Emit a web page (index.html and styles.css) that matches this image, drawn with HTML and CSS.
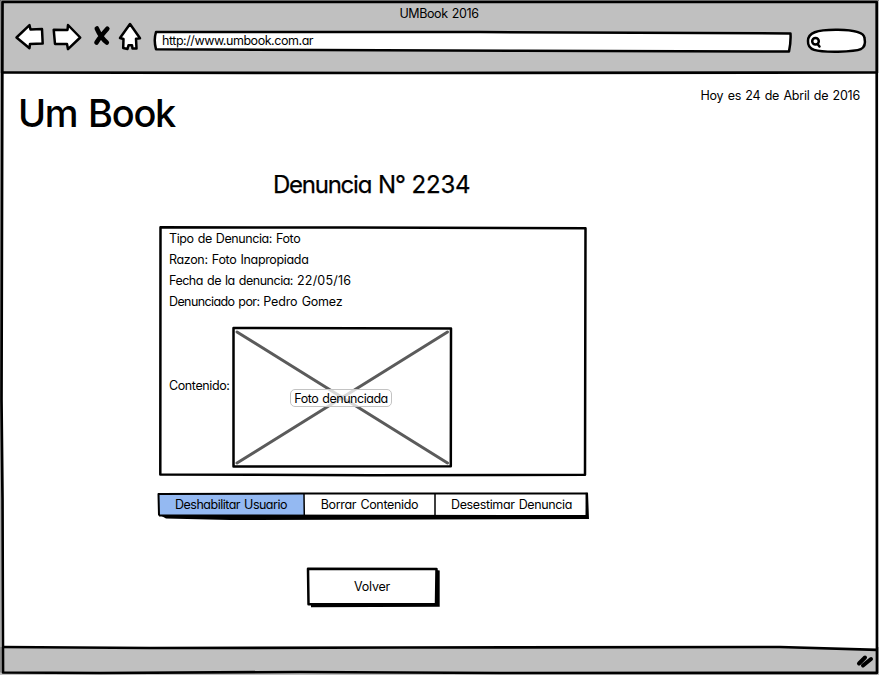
FILE: index.html
```html
<!DOCTYPE html>
<html lang="es">
<head>
<meta charset="utf-8">
<title>UMBook 2016</title>
<link rel="stylesheet" href="styles.css">
</head>
<body>
<div class="window">
  <header class="chrome">
    <div class="window-title"><span class="t-title">UMBook 2016</span></div>
    <div class="toolbar">
      <svg class="nav-icons" width="130" height="32" viewBox="14 22 130 32">
        <g class="ink">
          <path d="M16.5 37.500 L29.500 25.200 L30.500 29.500 L42 29 L42.700 43.500 L30 44 L29.500 48.200Z"/>
          <path d="M53.700 29.700 L67.500 30 L68 25 L80.200 37.500 L68 49.200 L67 44 L55 44 Z"/>
          <path d="M130 24 L140 38.300 L136 38.800 L136.500 48.500 L132.500 48.500 L132 45.200 L128.500 45.200 L127.500 49 L123.200 48 L123.500 39 L120 38 Z"/>
        </g>
        <path class="cross" d="M96.800 28.500 Q101 38 106.800 42.500 M107.300 28.800 Q100 37 96.500 42.500"/>
      </svg>
      <div class="address">
        <svg class="outline" width="640" height="24" viewBox="153 29 640 24"><path class="ink" d="M156 32 L480 32 L790.500 33.500 Q791 42 789 51.500 L520 50.800 L156 49.300 Q153.500 40 156 32Z"/></svg>
        <span class="t-url">http://www.umbook.com.ar</span>
      </div>
      <svg class="search" width="62" height="28" viewBox="806 27 62 28">
        <path class="ink" d="M808 41 C808 33 816 29.500 838 29.800 C855 30 864 33 864.500 38 C867 50 861 51 838 51.700 C815 52 807.500 50 808 41Z"/>
        <circle class="ink" cx="815.500" cy="41.300" r="3.300"/><path class="ink" d="M817.500 44 L819.500 46.500"/>
      </svg>
    </div>
  </header>
  <main class="page">
    <div class="masthead">
      <h1><span class="t-logo">Um Book</span></h1>
      <p class="date"><span class="t-date">Hoy es 24 de Abril de 2016</span></p>
    </div>
    <section class="report">
      <h2><span class="t-heading">Denuncia N° <span class="t-number">2234</span></span></h2>
      <div class="card">
        <svg class="outline" width="429" height="252" viewBox="158 225 429 252"><path class="ink" d="M160.500 227.300 L350 227.500 L585.500 228.300 L585 474.800 L370 475.300 L160.300 474.500Z"/></svg>
        <ul class="details">
          <li><span class="t-type">Tipo de Denuncia: Foto</span></li>
          <li><span class="t-reason">Razon: Foto Inapropiada</span></li>
          <li><span class="t-when">Fecha de la denuncia: <span class="t-day">22/05/16</span></span></li>
          <li><span class="t-who">Denunciado por: <span class="t-name">Pedro Gomez</span></span></li>
        </ul>
        <div class="content-row">
          <span class="content-label"><span class="t-content">Contenido:</span></span>
          <div class="photo">
            <svg class="outline" width="221" height="142" viewBox="232 326 221 142">
              <path class="ink" d="M233.500 328 L451 328.500 L450.800 466.200 L233.500 466.500Z"/>
              <path class="diagonals" d="M237 332 L447.500 463 M447.500 332 L237 463"/>
            </svg>
            <span class="caption"><span class="t-photo">Foto denunciada</span></span>
          </div>
        </div>
      </div>
      <div class="actions">
        <svg class="outline" width="433" height="30" viewBox="157 491 433 30">
          <path class="shadow" d="M158 514 L166 518.500 L230 520 L589 519 L588 492.500 L585 493 L584 513Z"/>
          <path class="selected" d="M159 493.500 L304 493.500 L304 515 L159 515Z"/>
          <path class="blank" d="M304 493.500 L586 493.500 L585.500 515 L304 515Z"/>
          <path class="line" d="M159 515.500 L158.500 494 L300 493.500 L586.500 493.500 L587 516 L159 515.500"/>
          <path class="divider" d="M304 494 L304.300 516 M435 494 L435 519"/>
        </svg>
        <button class="first"><span class="t-disable">Deshabilitar Usuario</span></button>
        <button class="second"><span class="t-delete">Borrar Contenido</span></button>
        <button class="third"><span class="t-dismiss">Desestimar Denuncia</span></button>
      </div>
      <button class="back">
        <svg class="outline" width="134" height="41" viewBox="306 567 134 41"><path class="shadow" d="M311 604 L311 607.300 L439.700 606.700 L439.700 570.500 L436 570Z"/><path class="ink" d="M308 568.800 L436.500 569 L436 604 L308.500 604.300Z"/></svg>
        <span class="t-back">Volver</span>
      </button>
    </section>
  </main>
  <footer class="status">
    <svg class="grip" width="20" height="14" viewBox="856 655 20 14"><path d="M859 664.500 L865 658.500 M863 666.500 L871 660"/></svg>
  </footer>
  <svg class="frame" width="879" height="675" viewBox="0 0 879 675">
    <path class="edge" d="M0 672.500 L0 0 L879 0"/>
    <path class="wedge" d="M780 647 L876 649.500 L876 647Z"/>
    <path class="frame-line" d="M2.500 2 L876.700 2 L877 672.800 L500 673 L300 672 L100 673 L3 672.500 L2.500 500 L1.500 400 L2.500 2Z"/>
    <path class="frame-line" d="M2 72.500 L400 73 L877 72.500"/>
    <path class="frame-line" d="M2 647 L150 648 L400 647.500 L780 647 L877 649.800"/>
  </svg>
</div>
</body>
</html>
```
FILE: styles.css
```css
* { box-sizing: border-box; }
body { margin: 0; background: #fff; color: #000; font: 12.5px/20px Inter, "Open Sans", sans-serif; font-feature-settings: "cv11" 1; word-spacing: 1px; }
h1, h2, p, ul { margin: 0; padding: 0; font-weight: 400; }
ul { list-style: none; }
svg { display: block; flex: none; overflow: visible; }
button { border: 0; padding: 0; background: none; color: inherit; font: inherit; font-feature-settings: inherit; word-spacing: inherit; }
span { white-space: nowrap; }
.window { position: relative; width: 879px; height: 675px; display: flex; flex-direction: column; overflow: hidden; }
.chrome { height: 73px; background: #c0c0c0; padding-top: 4px; }
.window-title { height: 18px; line-height: 19px; text-align: center; padding-right: 1px; }
.toolbar { display: flex; align-items: flex-start; padding-left: 14px; }
.address { position: relative; width: 640px; height: 24px; margin: 7px 13px 0 9px; padding: 2px 9px; }
.search { margin-top: 5px; }
.outline { position: absolute; inset: 0; z-index: -1; }
.address, .card, .photo, .actions, .back { isolation: isolate; }
.ink { fill: #fff; stroke: #000; stroke-width: 2.5; stroke-linejoin: round; stroke-linecap: round; }
.cross { fill: none; stroke: #000; stroke-width: 4.6; stroke-linecap: round; }
.page { height: 575px; }
.masthead { display: flex; justify-content: space-between; height: 92px; padding: 13px 19px 0 18px; }
h1 { font-size: 38px; line-height: 54px; font-weight: 500; }
h2 { font-size: 24px; line-height: 40px; height: 60px; padding-left: 115px; }
.report { width: 430px; margin-left: 158px; }
.card { position: relative; width: 429px; height: 252px; padding: 4px 11px; }
.details { height: 97px; }
.details li { height: 21px; }
.content-row { display: flex; align-items: center; }
.content-label { width: 63px; margin-top: -21px; }
.photo { position: relative; width: 221px; height: 142px; display: flex; justify-content: center; align-items: center; }
.diagonals { fill: none; stroke: #5b5b5b; stroke-width: 3; stroke-linecap: round; }
.caption { height: 18px; width: 102px; margin-top: 3px; margin-left: -3px; line-height: 17px; text-align: center; border: 1px solid #c3c3c3; border-radius: 5px; background: rgba(255,255,255,.76); }
.actions { position: relative; display: flex; width: 433px; height: 30px; margin: 14px 0 0 -1px; padding: 1px 2px 0 1px; }
.actions button { height: 25px; padding-top: 2px; }
.first { width: 146px; }
.second { width: 131px; }
.third { width: 153px; }
.shadow { fill: #000; }
.selected { fill: #94b9f2; }
.blank { fill: #fff; }
.line { fill: none; stroke: #000; stroke-width: 2; stroke-linejoin: round; }
.divider { fill: none; stroke: #000; stroke-width: 1.5; }
.back { position: relative; display: block; width: 134px; height: 41px; margin: 46px 0 0 148px; padding: 0 2px 0 0; }
.status { flex: 1; background: #c0c0c0; display: flex; justify-content: flex-end; padding: 7px 3px; }
.grip path { fill: none; stroke: #000; stroke-width: 4; stroke-linecap: round; }
.frame { position: absolute; inset: 0; pointer-events: none; }
.frame-line { fill: none; stroke: #000; stroke-width: 2.7; stroke-linejoin: round; }
.edge { fill: none; stroke: #555; stroke-width: 1; }
.wedge { fill: #fff; }
.t-logo { letter-spacing: -1.3px; word-spacing: 2px; }
.t-heading { letter-spacing: -1.25px; word-spacing: 1.5px; -webkit-text-stroke: .25px #000; }
.t-number { letter-spacing: -.2px; }
.t-title { letter-spacing: -.4px; }
.t-url { letter-spacing: -.45px; }
.t-date { letter-spacing: -.23px; }
.t-type { letter-spacing: -.42px; }
.t-reason { letter-spacing: -.34px; }
.t-when { letter-spacing: -.48px; }
.t-day { letter-spacing: .2px; }
.t-who { letter-spacing: -.6px; }
.t-name { letter-spacing: -.18px; }
.t-content { letter-spacing: -.39px; }
.t-photo { letter-spacing: -.47px; }
.t-disable { letter-spacing: -.5px; }
.t-delete { letter-spacing: -.33px; }
.t-dismiss { letter-spacing: -.37px; }
.t-back { letter-spacing: -.2px; }
```
